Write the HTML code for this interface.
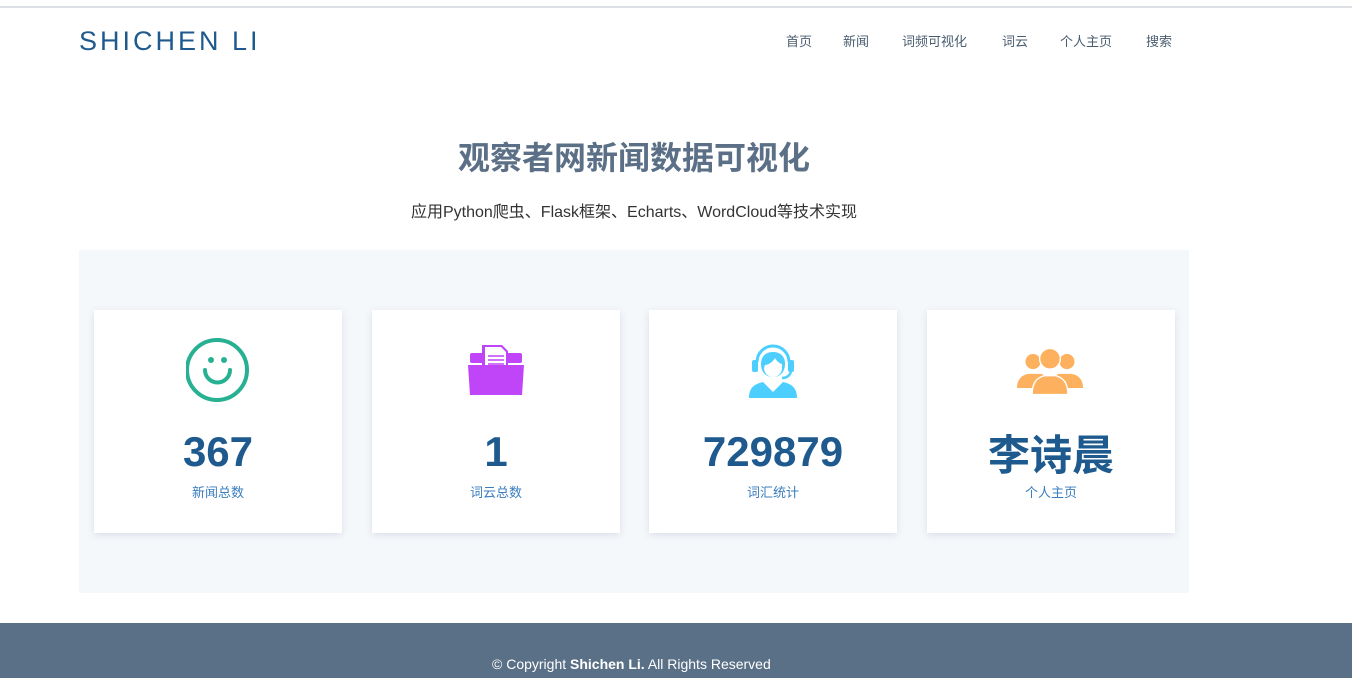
<!DOCTYPE html>
<html><head><meta charset="utf-8"><style>
*{margin:0;padding:0;box-sizing:border-box}
body{width:1352px;height:678px;overflow:hidden;background:#fff;font-family:"Liberation Sans","Noto Sans CJK SC",sans-serif;position:relative}
.topline{position:absolute;top:6px;left:0;width:1352px;height:2px;background:#dde1e6}
.logo{position:absolute;left:79px;top:26px;font-size:27px;letter-spacing:3px;color:#1f5a8e;font-weight:300;transform:scaleX(1.0)}
.nav{position:absolute;top:31px;font-size:13px;color:#4a5d70}
h1{position:absolute;top:133px;width:1268px;text-align:center;font-size:32px;color:#5b7086;font-weight:bold}
.sub{position:absolute;top:198px;width:1268px;text-align:center;font-size:16px;color:#333}
.box{position:absolute;left:79px;top:250px;width:1110px;height:343px;background:#f5f8fb}
.card{position:absolute;top:310px;width:248px;height:223px;background:#fff;box-shadow:0 2px 8px rgba(30,50,80,.12);text-align:center}
.card svg{position:absolute;left:92px;top:28px}
.num{position:absolute;top:118px;width:100%;font-size:42px;font-weight:bold;color:#1f5a8e}
.lab{position:absolute;top:172px;width:100%;font-size:13px;color:#3a7dbf}
.foot{position:absolute;top:623px;left:0;width:1352px;height:55px;background:#5a7087;color:#fff;font-size:14px}
.foot div{position:absolute;top:33px;left:492px}
</style></head><body>
<div class="topline"></div>
<div class="logo">SHICHEN LI</div>
<div class="nav" style="left:786px">首页</div>
<div class="nav" style="left:843px">新闻</div>
<div class="nav" style="left:902px">词频可视化</div>
<div class="nav" style="left:1002px">词云</div>
<div class="nav" style="left:1060px">个人主页</div>
<div class="nav" style="left:1146px">搜索</div>
<h1>观察者网新闻数据可视化</h1>
<div class="sub">应用Python爬虫、Flask框架、Echarts、WordCloud等技术实现</div>
<div class="box"></div>
<div class="card" style="left:94px"><svg width="64" height="64" viewBox="0 0 64 64"><circle cx="31" cy="32" r="30" fill="none" stroke="#27b092" stroke-width="4"/><circle cx="25" cy="22" r="3" fill="#27b092"/><circle cx="38" cy="22" r="3" fill="#27b092"/><path d="M19 32a12 12 0 0 0 25 0" fill="none" stroke="#27b092" stroke-width="4" stroke-linecap="round"/></svg><div class="num">367</div><div class="lab">新闻总数</div></div>
<div class="card" style="left:372px"><svg style="left:96px;top:35px" width="56" height="52" viewBox="0 0 56 52"><rect x="2" y="8" width="52" height="10" rx="2" fill="#c044f8"/><path d="M14 0h20l6 6v22H14z" fill="#c044f8"/><path d="M17 2h16l5 5v20H17z" fill="#fff"/><path d="M20 11h16M20 15h16M20 19h16" stroke="#c044f8" stroke-width="1.5"/><path d="M0 20h56l-2 30H2z" fill="#c044f8"/></svg><div class="num">1</div><div class="lab">词云总数</div></div>
<div class="card" style="left:649px"><svg style="left:96px;top:30px" width="56" height="60" viewBox="0 0 50 60"><path d="M9 22a16 16 0 0 1 32 0" fill="none" stroke="#4ccfff" stroke-width="3"/><rect x="4" y="20" width="6" height="12" rx="2" fill="#4ccfff"/><rect x="40" y="20" width="6" height="12" rx="2" fill="#4ccfff"/><path d="M13 24c0-8 5-12 12-12s12 4 12 12c0 8-5 13-12 13s-12-5-12-13z" fill="#4ccfff"/><path d="M17 25c3 0 8-3 10-7 2 4 6 6 7 6v4c0 5-4 9-9 9s-9-4-9-9z" fill="#fff"/><path d="M43 30c0 5-4 8-9 8" stroke="#4ccfff" stroke-width="2.5" fill="none"/><path d="M1 58c0-10 5-14 14-16l10 10 10-10c9 2 14 6 14 16z" fill="#4ccfff"/></svg><div class="num">729879</div><div class="lab">词汇统计</div></div>
<div class="card" style="left:927px"><svg style="left:90px;top:36px" width="66" height="50" viewBox="0 0 70 52"><circle cx="17" cy="16" r="8" fill="#fdb05d"/><path d="M0 44c0-10 6-14 12-15h14c4 2 6 6 6 15z" fill="#fdb05d"/><circle cx="53" cy="16" r="8" fill="#fdb05d"/><path d="M38 44c0-9 2-13 6-15h14c6 1 12 5 12 15z" fill="#fdb05d"/><circle cx="35" cy="13" r="11" fill="#fdb05d" stroke="#fff" stroke-width="1.5"/><path d="M16 51c0-14 6-18 13-20h12c7 2 13 6 13 20z" fill="#fdb05d" stroke="#fff" stroke-width="1.5"/></svg><div class="num" style="top:112px">李诗晨</div><div class="lab">个人主页</div></div>
<div class="foot"><div>© Copyright <b>Shichen Li.</b> All Rights Reserved</div></div>
</body></html>
